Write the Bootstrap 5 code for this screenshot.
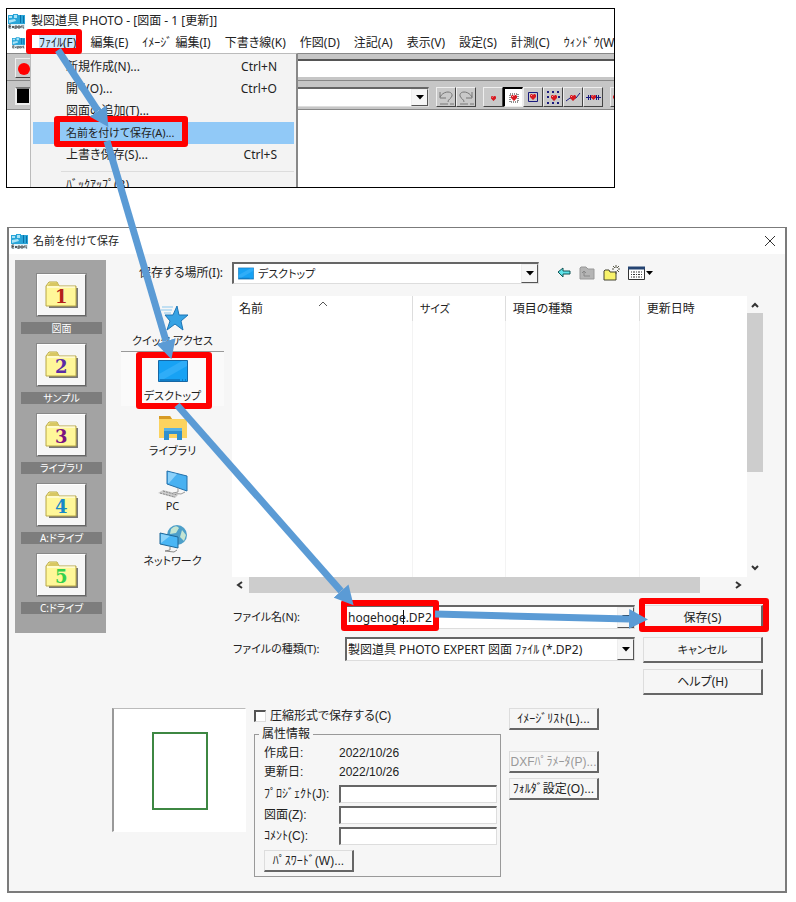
<!DOCTYPE html>
<html lang="ja">
<head>
<meta charset="utf-8">
<meta name="viewport" content="width=device-width, initial-scale=1">
<title>名前を付けて保存</title>
<link href="https://cdn.jsdelivr.net/npm/bootstrap@5.3.0/dist/css/bootstrap.min.css" rel="stylesheet">
<style>
body{font:12px/16px "Noto Sans","Noto Sans CJK JP",sans-serif;font-feature-settings:"palt";color:#222;background:#fff;white-space:nowrap}
button,input,select{font:inherit;font-feature-settings:inherit;color:inherit;border-radius:0;padding:0;margin:0}
a{color:inherit;text-decoration:none}
svg{display:block;flex:none}
.kana{font-size:11px}
/* application window */
.app-win{width:76.5%;height:180px;margin:8px 0 0 6px;border:1px solid #000}
.app-title{height:24px;padding-left:1px;gap:6px}
.app-menu{height:20px;gap:14px;padding-left:5px}
.app-menu li a{display:block}
.app-menu .open{background:#cce8ff}
.bar-one{height:28px;background:#c6c6c6;border-top:1px solid #888;border-bottom:1px solid #888}
.bar-one .strip{height:18px;margin-top:5px;background:#fff;border-top:2px solid #555}
.bar-two{height:29px;background:#c6c6c6;border-bottom:1px solid #888;padding-top:6px}
.swatch{flex:none;width:16px;height:18px;background:#000;border:2px solid #eee;border-top-color:#777}
.colour-box{flex:none;width:398px;height:20px}
.tool{flex:none;width:20px;height:20px;background:#c9c9c9;border:1px solid;border-color:#eee #444 #444 #eee}
.tool.on{background:#fff;border-color:#000 #eee #eee #000;border-width:2px 1px 1px 2px}
.tool-set{margin-left:7px}
.file-menu{left:23px;top:44px;width:268px;background:#f3f3f3;border:1px solid #bbb;border-right:2px solid #888;padding:2px 2px 0;z-index:2}
.file-menu a{display:flex;justify-content:space-between;height:22px;padding:3px 17px 3px 33px}
.file-menu .chosen{background:#91c9f7}
.file-menu hr{margin:5px 0 2px 28px;border-color:#999}
/* save dialog */
.dlg{margin:39px 9px 9px 7px;border:2px solid #7b7b7b;border-width:1px 2px 2px 2px;background:#f6f6f6}
.dlg-title{height:26px;background:#fff;padding:0 9px 0 2px;gap:5px}
.shelf{width:91px;height:373px;margin:6px 0 0 6px;background:#a3a3a3;padding:14px 4px 0 6px}
.shelf a{display:flex;flex-direction:column;align-items:center;height:70px}
.shelf .tile{width:49px;height:42px;background:#f6f6f6;border:1px solid;border-color:#fff #666 #666 #fff;box-shadow:0 0 0 1px #888;margin-bottom:6px}
.shelf .cap{align-self:stretch;height:12px;line-height:12px;background:#7d7d7d;color:#fff;text-align:center;font-size:10px}
.shelf text{font:bold 18px "DejaVu Serif","Liberation Serif",serif}
.main-col{padding:8px 22px 0 0}
.look-label{width:126px;padding-right:9px}
.combo{background:#fff;border:1px solid;border-color:#666 #ddd #ddd #666;border-top-width:2px;border-left-width:2px}
.combo select,.combo input{appearance:none;border:0;background:transparent;outline:0;min-width:0;flex:1;height:100%}
.drop{width:17px;background:#f6f6f6;border:1px solid;border-color:#eee #555 #555 #eee;display:flex;align-items:center;justify-content:center}
.look-box{width:307px;height:22px}
.places{width:103px;margin:0 8px 0 15px}
.places a{display:flex;flex-direction:column;align-items:center;justify-content:space-between;height:55px;padding:8px 0 2px;border-top:1px solid transparent}
.places .cur{background:#fafafa;border-top-color:#999}
.files{background:#fff;width:100%;height:281px;table-layout:fixed}
.files th{font-weight:400;height:25px;padding:0 7px;border-right:1px solid #ddd}
.files td{border-right:1px solid #f3f3f3}
.files th:last-child,.files td:last-child{border-right:0}
.vbar{width:16px;height:281px;padding:6px 0 5px}
.thumb{background:#cdcdcd}
.thumb-v{width:100%;height:59%}
.thumb-h{width:85%;height:100%}
.hbar{height:16px}
.names{padding-left:126px}
.names .combo{height:24px;padding-left:1px}
.field-label{width:113px;padding-left:1px}
.btn3{background:#f6f6f6;border:1px solid;border-color:#ddd #666 #666 #ddd;border-right-width:2px;border-bottom-width:2px;text-align:center}
.act{width:120px;height:26px}
.acts{gap:6px}
.lower{padding:13px 0 14px 103px}
.preview{width:134px;height:124px;background:#fff;border:1px solid #fff;border-left:2px solid #999;border-top-color:#bbb}
.attrs{font-family:"Liberation Sans","Noto Sans CJK JP",sans-serif}
.attrs .chk{appearance:none;width:12px;height:12px;background:#fff;border:1px solid;border-color:#555 #ddd #ddd #555;border-width:2px 1px 1px 2px}
.group{width:247px;height:151px;margin:2px 0 0;border:1px solid #999;padding:3px 3px 0 9px}
.group legend{float:none;width:auto;font-size:12px;line-height:16px;padding:0 3px;margin:0 0 0 -5px}
.group .pair{height:19px}
.group .pair>:first-child{width:75px}
.group .entry{height:21px}
.group .entry label{width:75px}
.group .entry input{flex:1;min-width:0;height:18px;background:#fff;border:1px solid;border-color:#666 #ddd #ddd #666;border-width:2px 1px 1px 2px}
.side{width:90px;height:22px;line-height:16px;overflow:hidden}
.side:disabled{color:#999}
.side-set{gap:5px}
.marks{left:0;top:0;z-index:5;pointer-events:none}
</style>
<script src="https://cdn.jsdelivr.net/npm/bootstrap@5.3.0/dist/js/bootstrap.bundle.min.js"></script>
</head>
<body class="position-relative">
<svg width="0" height="0" class="position-absolute" aria-hidden="true">
<defs>
<symbol id="logo" viewBox="0 0 17 17"><path fill="#29a5d8" d="M0 2h5V1h5v1h7v9H0z"/><path fill="#a9e3f7" d="M1 3h3v2H1zM6 2h3v3H6zM1 7l6-1 1 2-7 2z"/><path fill="#0870a8" d="M12 2h1v8h-1zM15 3h1v7h-1z"/><path fill="#dff1f8" d="M0 11h17v5H0z"/><path d="M1 12v3h2M1 12h2M1 13.500h2M4 13l2 2M6 13l-2 2M7 13v3M7 13h2v2H7M10 13v2h2v-2h-2M13 13v2M13 13h1M15 12v3h1" stroke="#333" stroke-width=".8" fill="none"/></symbol>
<symbol id="down" viewBox="0 0 8 5"><path d="M0 0h8L4 4.500z"/></symbol>
<symbol id="folder" viewBox="0 0 34 28"><path fill="#777" d="M4 7h29v20H4z"/><path fill="#fff799" stroke="#b7a646" d="M1 25V5l3-4h8l2 4h17v20z"/><path fill="#d8c763" d="M2 5l3-3h7l2 3z"/><path d="M2 6h28" stroke="#fff"/></symbol>
<symbol id="desk" viewBox="0 0 30 22"><path fill="#17a2f4" stroke="#1667a5" d="M.5.500h29v21H.500z"/><path fill="#2fadf8" d="M1 14L24 1h5v5L6 19H1z"/><path d="M2 20h20M24 20h1M27 20h1" stroke="#0b5b9c"/></symbol>
<symbol id="heart" viewBox="0 0 6 6"><path fill="#d71920" d="M0 1l1-1h1l1 1 1-1h1l1 1v2L3 6 0 3z"/><path d="M1 1h1v1H1z" fill="#faa"/></symbol>
</defs></svg>

<section class="app-win position-relative overflow-hidden bg-white">
<div class="app-title d-flex align-items-center"><svg width="17" height="17"><use href="#logo"/></svg><span>製図道具 PHOTO - [図面 - 1 [更新]]</span></div>
<nav><ul class="app-menu d-flex align-items-center list-unstyled mb-0">
<li><svg width="13" height="16"><use href="#logo"/></svg></li>
<li class="ms-n1"><a href="#" class="open">ﾌｧｲﾙ(F)</a></li><li><a href="#">編集(E)</a></li><li><a href="#">ｲﾒｰｼﾞ 編集(I)</a></li><li><a href="#">下書き線(K)</a></li><li><a href="#">作図(D)</a></li><li><a href="#">注記(A)</a></li><li><a href="#">表示(V)</a></li><li><a href="#">設定(S)</a></li><li><a href="#">計測(C)</a></li><li><a href="#">ｳｨﾝﾄﾞｳ(W)</a></li>
</ul></nav>
<div class="bar-one d-flex"><button class="tool ms-2 mt-1" aria-label="記録"><svg width="18" height="16"><circle cx="8" cy="9" r="6" fill="red"/></svg></button><div class="strip flex-grow-1"></div></div>
<div class="bar-two d-flex ps-2"><span class="swatch"></span>
<div class="combo colour-box d-flex"><select aria-label="色"><option></option></select><span class="drop"><svg width="8" height="5"><use href="#down"/></svg></span></div>
<div class="d-flex tool-set">
<button class="tool" aria-label="元に戻す"><svg width="18" height="18" fill="none" stroke="#777"><path d="M3 4v6h6M3 9c4-7 13-6 12-1-1 3-4 3-4 6M3 16h8M13 16h4"/></svg></button><button class="tool" aria-label="やり直し"><svg width="18" height="18" fill="none" stroke="#777"><path d="M15 4v6H9M15 9C11 2 2 3 3 8c1 3 4 3 4 6M3 16h8M13 16h4"/></svg></button></div>
<div class="d-flex tool-set">
<button class="tool" aria-label="点"><svg width="18" height="18"><use href="#heart" x="7" y="8" width="5" height="5"/></svg></button>
<button class="tool on" aria-label="範囲"><svg width="17" height="17"><path d="M5 5h8v8H5z" fill="none" stroke="#222" stroke-dasharray="1 1"/><use href="#heart" x="6" y="6" width="6" height="6"/></svg></button>
<button class="tool" aria-label="枠"><svg width="18" height="18"><path d="M4.500 4.500h9v9h-9z" fill="none" stroke="#19197e"/><use href="#heart" x="6" y="6" width="6" height="6"/></svg></button>
<button class="tool" aria-label="格子"><svg width="18" height="18"><path d="M3 4h13M3 15h13" stroke="#19197e" stroke-width="2" stroke-dasharray="2 3"/><path d="M3 9h2M14 9h2" stroke="#19197e" stroke-width="2"/><use href="#heart" x="7" y="7" width="6" height="6"/></svg></button>
<button class="tool" aria-label="線上"><svg width="18" height="18"><path d="M2 13l4-3h6l4-5" fill="none" stroke="#19197e"/><use href="#heart" x="6" y="7" width="6" height="6"/></svg></button>
<button class="tool" aria-label="目盛"><svg width="18" height="18"><path d="M2 9.500h15M4.500 7v5M6.500 7v5M12.500 7v5M14.500 7v5" stroke="#19197e"/><use href="#heart" x="7" y="7" width="5" height="5"/></svg></button></div>
<button class="tool tool-set" aria-label="次"><svg width="18" height="18"><use href="#heart" x="2" y="7" width="6" height="6"/></svg></button>
</div>
<div class="file-menu position-absolute">
<a href="#"><span>新規作成(N)...</span><span>Ctrl+N</span></a><a href="#"><span>開く(O)...</span><span>Ctrl+O</span></a><a href="#"><span>図面の追加(T)...</span></a><a href="#" class="chosen kana"><span>名前を付けて保存(A)...</span></a><a href="#"><span>上書き保存(S)...</span><span>Ctrl+S</span></a><hr><a href="#"><span>ﾊﾞｯｸｱｯﾌﾟ(B)</span></a>
</div>
</section>

<section class="dlg">
<header class="dlg-title d-flex align-items-center"><svg width="17" height="17"><use href="#logo"/></svg><span class="kana">名前を付けて保存</span><button class="ms-auto border-0 bg-transparent" aria-label="閉じる"><svg width="12" height="12"><path d="M1 1l10 10M11 1L1 11" stroke="#333"/></svg></button></header>
<div class="d-flex align-items-start">
<nav class="shelf flex-shrink-0">
<a href="#"><span class="tile d-flex align-items-center justify-content-center"><svg width="34" height="28"><use href="#folder"/><text x="10" y="22" fill="#b3201b">1</text></svg></span><span class="cap">図面</span></a>
<a href="#"><span class="tile d-flex align-items-center justify-content-center"><svg width="34" height="28"><use href="#folder"/><text x="10" y="22" fill="#5b2ca5">2</text></svg></span><span class="cap">サンプル</span></a>
<a href="#"><span class="tile d-flex align-items-center justify-content-center"><svg width="34" height="28"><use href="#folder"/><text x="10" y="22" fill="#7b1480">3</text></svg></span><span class="cap">ライブラリ</span></a>
<a href="#"><span class="tile d-flex align-items-center justify-content-center"><svg width="34" height="28"><use href="#folder"/><text x="10" y="22" fill="#1688c9">4</text></svg></span><span class="cap">A:ドライブ</span></a>
<a href="#"><span class="tile d-flex align-items-center justify-content-center"><svg width="34" height="28"><use href="#folder"/><text x="10" y="22" fill="#35d04c">5</text></svg></span><span class="cap">C:ドライブ</span></a>
</nav>
<div class="main-col flex-grow-1">
<div class="d-flex align-items-center">
<label for="look" class="look-label text-end">保存する場所(I):</label>
<div class="combo look-box d-flex align-items-center"><svg class="mx-1" width="16" height="13"><use href="#desk" width="16" height="13"/></svg><select id="look" class="kana"><option>デスクトップ</option></select><span class="drop align-self-stretch"><svg width="8" height="5"><use href="#down"/></svg></span></div>
<div class="d-flex align-items-center gap-2 ms-3">
<button class="border-0 bg-transparent" aria-label="戻る"><svg width="16" height="16"><path d="M3 7l5-4v3h7v3H8v3z" fill="#5fe3ea" stroke="#155" /></svg></button>
<button class="border-0 bg-transparent" aria-label="上へ"><svg width="16" height="16"><path d="M1 3l1-1h5l2 2h6v10H1z" fill="#b5b5b5" stroke="#999"/><path d="M5 11h6M5 11V7M3 8l2-2 2 2" fill="none" stroke="#888"/></svg></button>
<button class="border-0 bg-transparent" aria-label="新しいフォルダー"><svg width="17" height="17"><path d="M1 15V6l1-1h4l1 2h6v8z" fill="#f8f36b" stroke="#443"/><path d="M13 0v3M13 6v3M9 4h2M15 4h2M10 1l2 2M16 1l-2 2M16 7l-2-2" stroke="#554"/></svg></button>
<button class="border-0 bg-transparent" aria-label="表示"><svg width="26" height="16"><path d="M.5 2.500h16v12H.500z" fill="#fff" stroke="#333"/><path d="M0 3h17" stroke="#254472" stroke-width="3"/><path d="M3 7h12M3 9.500h12M3 12h12" stroke="#333" stroke-dasharray="1 1 2 1"/><path d="M18 6h7l-3.500 4z"/></svg></button>
</div></div>
<div class="d-flex mt-2 pt-1">
<nav class="places kana flex-shrink-0">
<a href="#"><svg width="34" height="26"><path d="M21 1l2 9h9l-7 6 2 9-8-6-8 6 3-9-5-6h8z" fill="#37a3e4" stroke="#1c75b5"/><path d="M6 2h11M5 5h11M8 8h7" stroke="#8bc8ee"/></svg>クイック アクセス</a>
<a href="#" class="cur"><svg width="30" height="22"><use href="#desk" width="30" height="22"/></svg>デスクトップ</a>
<a href="#"><svg width="30" height="26"><path d="M1 1h11l2 3h15v19H1z" fill="#fbd35f"/><path d="M1 1h11l2 3H1z" fill="#d79b26"/><path d="M6 13h18v12h-5v-6h-8v6H6z" fill="#2f91cf"/><path d="M6 13h18v3H6z" fill="#57b2e4"/></svg>ライブラリ</a>
<a href="#"><svg width="32" height="28"><path d="M10 1l20 5v15L10 14z" fill="#49b1f1" stroke="#246fa8"/><path d="M11 2l9 2-8 9h-1z" fill="#8cd1fa"/><path d="M21 18v4l-5 1 8 1 4-2" fill="none" stroke="#999"/><path d="M1 23l5-3 16 4-4 4z" fill="#ccc"/><path d="M3 23l15 4M6 21l14 4" stroke="#888" stroke-dasharray="2 1"/></svg>PC</a>
<a href="#"><svg width="30" height="28"><circle cx="19" cy="10" r="10" fill="#4d9fc9"/><path d="M13 4q5-5 8-1l-3 5-6 1zM24 5l4 5-2 6-4-4z" fill="#c4e5d2"/><path d="M2 8l18 4v11L2 19z" fill="#49b6f5" stroke="#1e6798"/><path d="M3 9l9 2-9 7z" fill="#8bd3fa"/><path d="M12 22v3l-5 1 9 1 3-2" fill="none" stroke="#888"/></svg>ネットワーク</a>
</nav>
<div class="flex-grow-1">
<div class="d-flex"><table class="files"><colgroup><col style="width:35%"><col style="width:18%"><col style="width:26%"><col></colgroup><thead><tr><th><span class="d-flex justify-content-between">名前<svg width="86" height="16" viewBox="0 0 86 16"><path d="M0 5l4-4 4 4" fill="none" stroke="#555"/></svg></span></th><th class="kana">サイズ</th><th>項目の種類</th><th>更新日時</th></tr></thead><tbody><tr><td></td><td></td><td></td><td></td></tr></tbody></table>
<div class="vbar d-flex flex-column align-items-center"><svg width="8" height="7"><path d="M1 5l3-3 3 3" fill="none" stroke="#333" stroke-width="2"/></svg><div class="thumb thumb-v mt-1"></div><svg class="mt-auto" width="8" height="7"><path d="M1 1l3 3 3-3" fill="none" stroke="#333" stroke-width="2"/></svg></div></div>
<div class="hbar d-flex align-items-center"><svg width="17" height="8"><path d="M10 1L6 4l4 3" fill="none" stroke="#333" stroke-width="2"/></svg><div class="thumb thumb-h"></div><svg class="ms-auto me-3" width="17" height="8"><path d="M6 1l4 3-4 3" fill="none" stroke="#333" stroke-width="2"/></svg></div>
</div></div>
<form class="names d-flex mt-2 pt-1">
<div class="flex-grow-1 me-2 d-flex flex-column gap-2">
<div class="d-flex align-items-center"><label class="field-label kana" for="fn">ファイル名(N):</label><div class="combo flex-grow-1 d-flex"><input id="fn" value="hogehoge.DP2"><span class="drop"><svg width="8" height="5"><use href="#down"/></svg></span></div></div>
<div class="d-flex align-items-center"><label class="field-label kana" for="ft">ファイルの種類(T):</label><div class="combo flex-grow-1 d-flex"><select id="ft"><option>製図道具 PHOTO EXPERT 図面 ﾌｧｲﾙ (*.DP2)</option></select><span class="drop"><svg width="8" height="5"><use href="#down"/></svg></span></div></div>
</div>
<div class="acts d-flex flex-column"><button type="button" class="btn3 act">保存(S)</button><button type="button" class="btn3 act kana">キャンセル</button><button type="button" class="btn3 act">ヘルプ(H)</button></div>
</form>
</div></div>
<div class="lower d-flex attrs">
<div class="preview flex-shrink-0"><svg width="130" height="122"><path d="M39 24h54v76H39z" fill="none" stroke="#3d8742" stroke-width="2"/></svg></div>
<div class="ms-2">
<div class="d-flex align-items-center"><input type="checkbox" class="chk me-1" id="zip"><label for="zip">圧縮形式で保存する(C)</label></div>
<fieldset class="group"><legend>属性情報</legend>
<div class="pair d-flex"><span>作成日:</span><span>2022/10/26</span></div><div class="pair d-flex"><span>更新日:</span><span>2022/10/26</span></div>
<div class="entry d-flex align-items-center"><label for="pj">ﾌﾟﾛｼﾞｪｸﾄ(J):</label><input id="pj"></div><div class="entry d-flex align-items-center"><label for="zu">図面(Z):</label><input id="zu"></div><div class="entry d-flex align-items-center"><label for="cm">ｺﾒﾝﾄ(C):</label><input id="cm"></div>
<button type="button" class="btn3 side mt-1">ﾊﾟｽﾜｰﾄﾞ(W)...</button>
</fieldset></div>
<div class="side-set ms-2 d-flex flex-column"><button type="button" class="btn3 side">ｲﾒｰｼﾞﾘｽﾄ(L)...</button><button type="button" class="btn3 side mt-3" disabled>DXFﾊﾟﾗﾒｰﾀ(P)...</button><button type="button" class="btn3 side">ﾌｫﾙﾀﾞ設定(O)...</button></div>
</div>
</section>

<svg class="marks position-absolute" width="780" height="640" aria-hidden="true">
<defs><marker id="tip" markerUnits="userSpaceOnUse" markerWidth="20" markerHeight="20" refX="0" refY="10" orient="auto"><path d="M0 0l19 10L0 20z" fill="#5b9bd5"/></marker></defs>
<g fill="none" stroke="#f00" stroke-width="6" stroke-linejoin="round"><path d="M29 32h50v19H29zM57 119h128v25H57zM139 355h70v51h-70zM344 603h92v25h-92z"/><path d="M642 601h124v28H642z"/></g>
<g stroke="#5b9bd5" stroke-width="7"><path d="M58 50L98 111" marker-end="url(#tip)"/><path d="M107 141L166 341" marker-end="url(#tip)"/><path d="M177 405L341 591" marker-end="url(#tip)"/><path d="M435 614L629 619" marker-end="url(#tip)"/></g>
<path d="M403.500 610v14" stroke="#111"/>
</svg>
</body>
</html>
